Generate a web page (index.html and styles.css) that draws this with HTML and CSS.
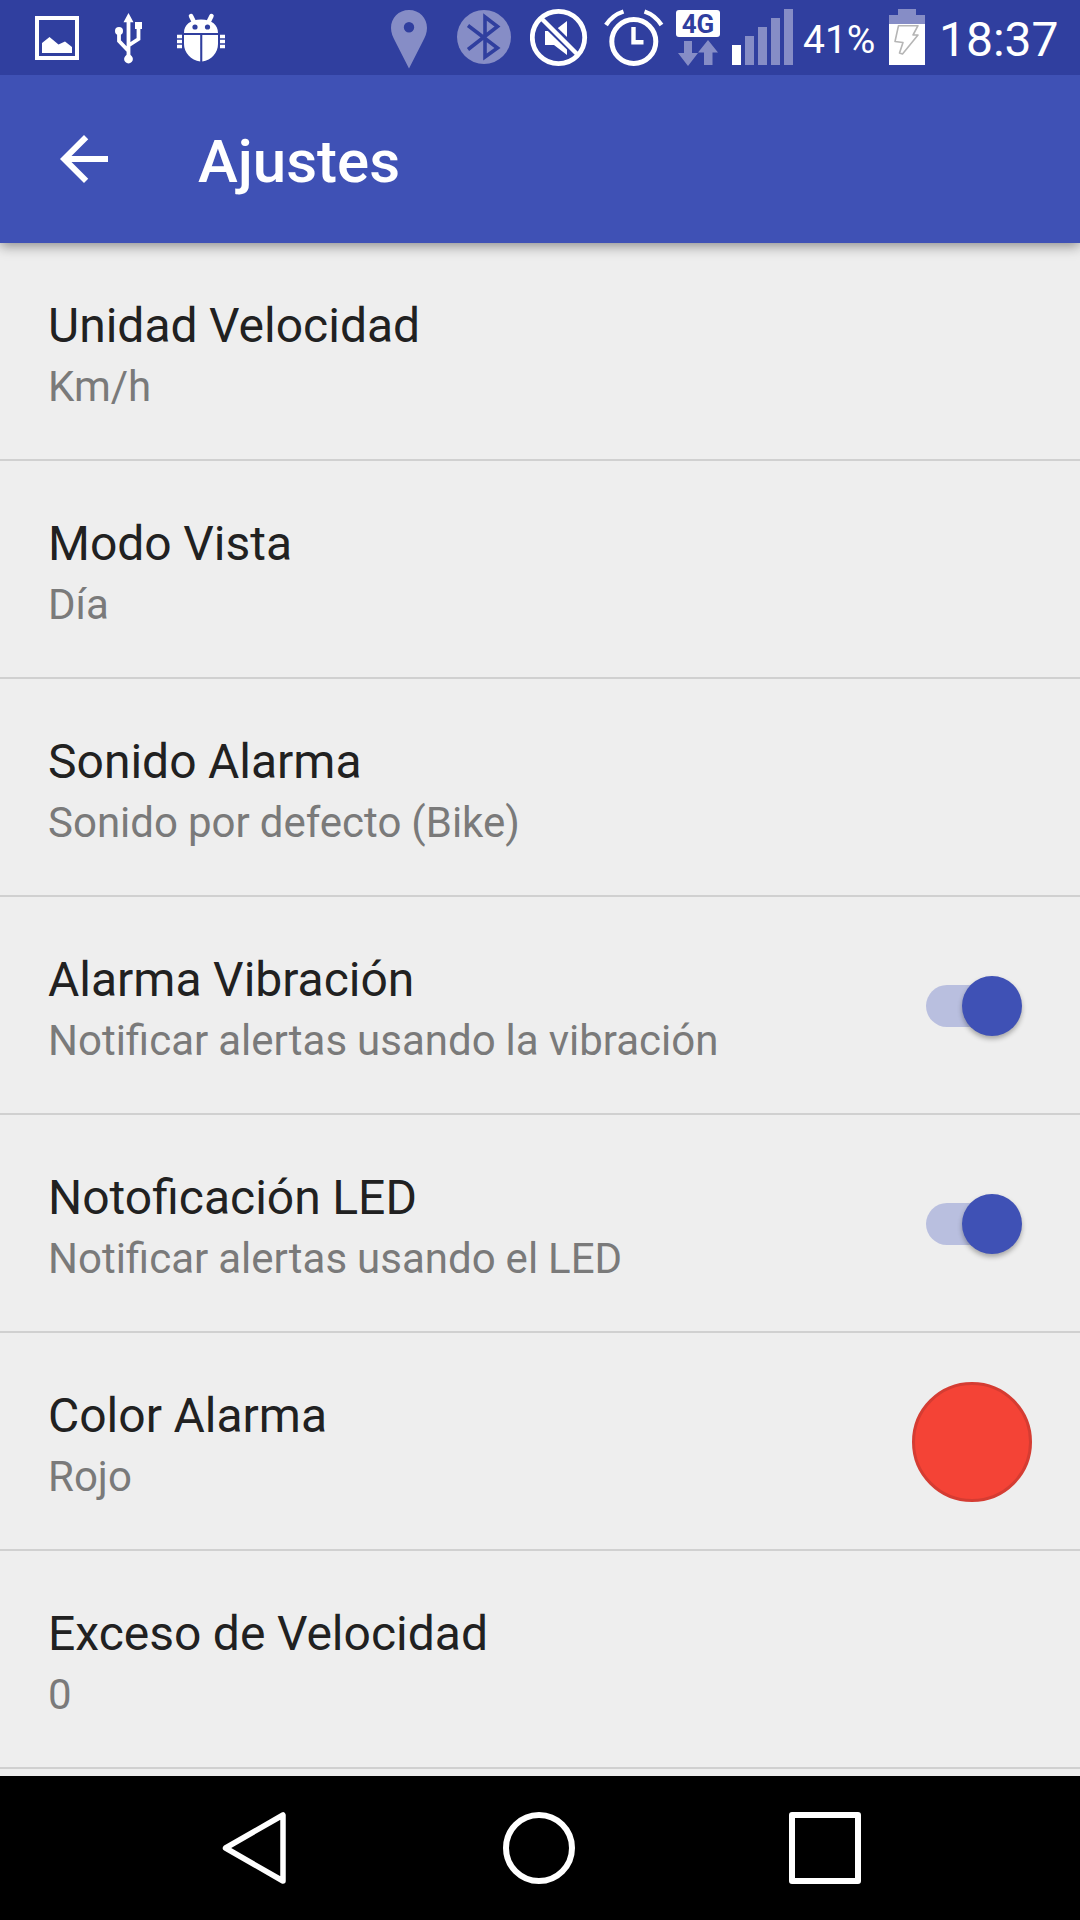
FILE: index.html
```html
<!DOCTYPE html>
<html lang="es">
<head>
<meta charset="utf-8">
<title>Ajustes</title>
<link rel="stylesheet" href="styles.css">
</head>
<body>
<div class="screen">
  <div class="status-bar">
    <div class="status-left">
      <svg width="44" height="75" viewBox="35 0 44 75"><path fill="none" stroke="#fff" stroke-width="4" d="M37 18h40v40H37z"/><path fill="#fff" d="M42 53V43l7.500-6 9 7.500 6.500-3 7 5.500v6z"/></svg>
      <svg class="usb" width="28" height="75" viewBox="115 0 28 75"><path fill="none" stroke="#fff" stroke-width="3.800" d="M128.500 20v38M119 31v10l9.500 10M138.500 27v12l-10 6.500"/><path fill="#fff" d="M128.500 13l5 9.300h-10zM135 22h7v7h-7z"/><circle cx="119" cy="31" r="4" fill="#fff"/><circle cx="128.500" cy="59" r="4.400" fill="#fff"/></svg>
      <svg width="48" height="75" viewBox="177 0 48 75"><path fill="#fff" d="M184 33c0-8 6-13.500 17-13.500S218 25 218 33zM184 35h16.200v26.500C191 60 184 53 184 44zM202.300 35H218v9c0 9-6.500 16-15.700 17.500zM177 34.800h5v3.500h-5zM177 39.800h5v3.500h-5zM177 44.800h5v3.500h-5zM220 34.800h5v3.500h-5zM220 39.800h5v3.500h-5zM220 44.800h5v3.500h-5z"/><path stroke="#fff" stroke-width="4.500" stroke-linecap="round" d="M191 16l3 6M211.500 16l-3 6"/><circle cx="195" cy="27" r="2.600" fill="#303f9f"/><circle cx="207.500" cy="27" r="2.600" fill="#303f9f"/></svg>
    </div>
    <div class="status-right">
      <svg width="36" height="75" viewBox="391 0 36 75"><path fill="#868dc6" fill-rule="evenodd" d="M409 10c-10.500 0-18 8-18 18 0 5 2 9 4 13l14 27.500L423 41c2-4 4-8 4-13 0-10-7.500-18-18-18zm0 12a5 5 0 1 1 0 10.400 5 5 0 0 1 0-10.400z"/></svg>
      <svg class="bluetooth" width="54" height="75" viewBox="457 0 54 75"><circle cx="484" cy="37" r="27" fill="#868dc6"/><path fill="none" stroke="#303f9f" stroke-width="3.600" d="M468 25.500L497.500 48 485 57V17l12.500 9.500L468 49.500"/></svg>
      <svg class="muted" width="58" height="75" viewBox="530 0 58 75"><path fill="#fff" d="M545 31h9l13-10v34l-13-10h-9z"/><path stroke="#303f9f" stroke-width="9" d="M542 19l36 35"/><path stroke="#fff" stroke-width="4.500" d="M541 18l36 36"/><circle cx="558.500" cy="37.500" r="26.200" fill="none" stroke="#fff" stroke-width="4.800"/></svg>
      <svg class="alarm" width="60" height="75" viewBox="603.500 0 60 75"><circle cx="633.300" cy="41.500" r="22" fill="none" stroke="#fff" stroke-width="5"/><path fill="none" stroke="#fff" stroke-width="4.400" d="M633 27v15.300h10M605.500 25q6.500-10 17.500-13.500M661 25q-6.500-10-17-13.500"/></svg>
      <div class="network">
        <span class="network-type">4G</span>
        <svg width="40" height="26" viewBox="678 40 40 26"><path fill="#868dc6" d="M684 41h8v12h6l-10 13-10-13h6zM704 65h8.500V52.500h5.500L708 40l-10 12.500h6z"/></svg>
      </div>
      <svg class="signal" width="61" height="75" viewBox="732 0 61 75"><path fill="#fff" d="M732 45h9v20h-9z"/><path fill="#868dc6" d="M745 36h9v29h-9zM758 27h9v38h-9zM771 18h9v47h-9zM784 9h9v56h-9z"/></svg>
      <span class="battery-level">41%</span>
      <svg class="battery" width="36" height="75" viewBox="889 0 36 75"><path fill="#868dc6" d="M898 9h18v6h9v9h-36v-9h9z"/><path fill="#fff" d="M889 24h36v41h-36z"/><path fill="none" stroke="#b5b5b5" stroke-width="1.600" stroke-linejoin="round" d="M898.500 25.700h19.500l-5 9.300h5l-15.500 19-3-1 3.500-10.500-8-1z"/></svg>
      <span class="clock">18:37</span>
    </div>
  </div>

  <header class="app-bar">
    <svg width="72" height="72" viewBox="0 0 24 24"><path fill="#fff" d="M20 11H7.830l5.590-5.590L12 4l-8 8 8 8 1.410-1.410L7.830 13H20v-2z"/></svg>
    <h1 class="app-title">Ajustes</h1>
  </header>

  <main class="settings">
    <div class="row"><div class="row-text"><div class="row-title">Unidad Velocidad</div><div class="row-summary">Km/h</div></div></div>
    <div class="row"><div class="row-text"><div class="row-title">Modo Vista</div><div class="row-summary">Día</div></div></div>
    <div class="row"><div class="row-text"><div class="row-title">Sonido Alarma</div><div class="row-summary">Sonido por defecto (Bike)</div></div></div>
    <div class="row"><div class="row-text"><div class="row-title">Alarma Vibración</div><div class="row-summary">Notificar alertas usando la vibración</div></div><div class="switch"><div class="thumb"></div></div></div>
    <div class="row"><div class="row-text"><div class="row-title">Notoficación LED</div><div class="row-summary">Notificar alertas usando el LED</div></div><div class="switch"><div class="thumb"></div></div></div>
    <div class="row"><div class="row-text"><div class="row-title">Color Alarma</div><div class="row-summary">Rojo</div></div><div class="swatch"></div></div>
    <div class="row"><div class="row-text"><div class="row-title">Exceso de Velocidad</div><div class="row-summary">0</div></div></div>
  </main>

  <nav class="nav-bar">
    <svg width="72" height="72" viewBox="0 0 72 72"><path fill="none" stroke="#fff" stroke-width="5.500" stroke-linejoin="round" d="M66 3v66L8.500 36z"/></svg>
    <svg width="72" height="72" viewBox="0 0 72 72"><circle cx="36" cy="36" r="33" fill="none" stroke="#fff" stroke-width="6"/></svg>
    <svg width="72" height="72" viewBox="0 0 72 72"><rect x="3" y="3" width="66" height="66" fill="none" stroke="#fff" stroke-width="6" stroke-linejoin="round"/></svg>
  </nav>
</div>
</body>
</html>
```
FILE: styles.css
```css
* {
  box-sizing: border-box;
}

body {
  margin: 0;
  font-family: Roboto, "Liberation Sans", sans-serif;
}

svg {
  display: block;
  flex: none;
}

.screen {
  display: flex;
  flex-direction: column;
  width: 1080px;
  height: 1920px;
  overflow: hidden;
  background: #eee;
}

.status-bar {
  position: relative;
  z-index: 1;
  display: flex;
  justify-content: space-between;
  flex: none;
  height: 75px;
  padding: 0 22px 0 35px;
  background: #303f9f;
  color: #fff;
}

.status-left {
  display: flex;
}

.usb {
  margin: 0 34px 0 36px;
}

.status-right {
  display: flex;
}

.bluetooth {
  margin-left: 30px;
}

.muted {
  margin-left: 19px;
}

.alarm {
  margin-left: 15.5px;
}

.network {
  display: flex;
  flex-direction: column;
  align-items: center;
  gap: 3px;
  width: 44px;
  margin-left: 12.5px;
  padding-top: 10px;
}

.network-type {
  width: 44px;
  height: 27px;
  border-radius: 3px;
  background: #fff;
  color: #303f9f;
  font-size: 26px;
  font-weight: 700;
  line-height: 28px;
  text-align: center;
}

.signal {
  margin-left: 12px;
}

.battery-level {
  width: 84px;
  margin-left: 10px;
  font-size: 39px;
  line-height: 80px;
}

.battery {
  margin-left: 2px;
}

.clock {
  width: 119px;
  margin-left: 14px;
  font-size: 48px;
  line-height: 79px;
}

.app-bar {
  display: flex;
  align-items: center;
  flex: none;
  gap: 78px;
  height: 168px;
  padding-left: 48px;
  background: #3f51b5;
  box-shadow: 0 3px 12px rgba(0, 0, 0, 0.42);
  color: #fff;
}

.app-title {
  margin: 6px 0 0;
  font-size: 60px;
  font-weight: 500;
  line-height: 70px;
}

.settings {
  flex: 1;
  min-height: 0;
}

.row {
  display: flex;
  align-items: center;
  justify-content: space-between;
  height: 218px;
  padding: 0 48px;
  border-bottom: 2px solid #d0d0d0;
}

.row-text {
  padding-top: 12px;
  word-spacing: -0.4px;
}

.row-title {
  color: #212121;
  font-size: 48px;
  line-height: 60px;
}

.row-summary {
  color: #7a7a7a;
  font-size: 42px;
  line-height: 62px;
}

.switch {
  display: flex;
  align-items: center;
  justify-content: flex-end;
  width: 86px;
  height: 42px;
  margin: 2px 20px 0 0;
  border-radius: 21px;
  background: #b9bfdf;
}

.thumb {
  flex: none;
  width: 60px;
  height: 60px;
  margin-right: -9.5px;
  border-radius: 50%;
  background: #3f51b5;
  box-shadow: 0 3px 5px rgba(0, 0, 0, 0.3);
}

.swatch {
  width: 120px;
  height: 120px;
  margin-top: 2px;
  border: 3px solid #d53c32;
  border-radius: 50%;
  background: #f44336;
}

.nav-bar {
  display: flex;
  justify-content: center;
  align-items: center;
  flex: none;
  gap: 214px;
  height: 144px;
  padding-right: 2px;
  background: #000;
}
```
